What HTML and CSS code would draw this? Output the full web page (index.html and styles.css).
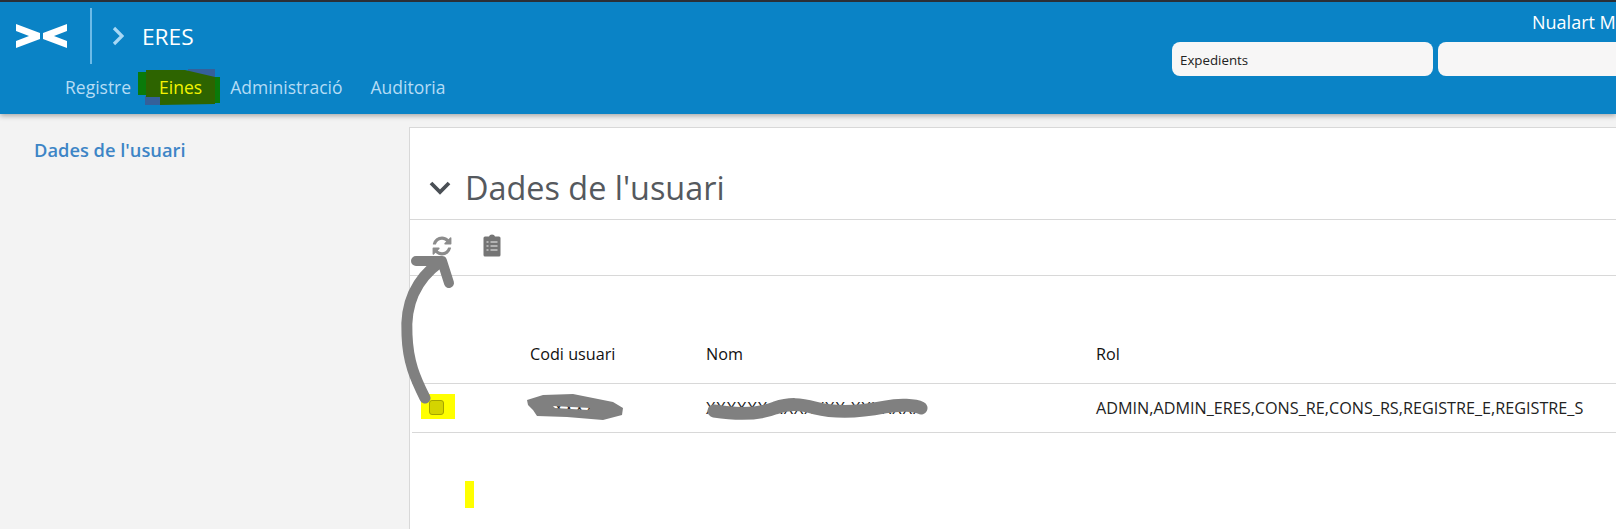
FILE: index.html
```html
<!DOCTYPE html>
<html lang="ca">
<head>
  <meta charset="utf-8">
  <title>ERES</title>
  <link rel="stylesheet" href="styles.css">
</head>
<body>
<header class="topbar">
  <div class="topbar-left">
    <div class="brand-row">
      <svg class="logo" width="52" height="26" viewBox="0 0 52 26">
        <path d="M0 1 L24 10 V16 L0 25 V18 L13 13 L0 8 Z" fill="#fff"/>
        <path d="M51 1 L27 10 V16 L51 25 V18 L38 13 L51 8 Z" fill="#fff"/>
      </svg>
      <span class="brand-sep"></span>
      <svg class="brand-chevron" width="12" height="20" viewBox="0 0 12 20">
        <path d="M2 2 L10 10 L2 18" fill="none" stroke="#a8d8f5" stroke-width="3.2"/>
      </svg>
      <span class="brand-name">ERES</span>
    </div>
    <nav class="nav">
      <a>Registre</a>
      <a class="nav-active">Eines</a>
      <a>Administració</a>
      <a>Auditoria</a>
    </nav>
  </div>
  <div class="topbar-right">
    <div class="user-name">Nualart M</div>
    <div class="search-row">
      <div class="search-box">Expedients</div>
      <div class="search-box search-box-wide"></div>
    </div>
  </div>
</header>

<div class="content">
  <aside class="sidebar">
    <a class="side-link">Dades de l'usuari</a>
  </aside>
  <main class="panel">
    <div class="panel-title">
      <svg width="24" height="16" viewBox="0 0 24 16">
        <path d="M3 3 L12 12 L21 3" fill="none" stroke="#4a4f55" stroke-width="3.8"/>
      </svg>
      <h1>Dades de l'usuari</h1>
    </div>
    <div class="toolbar">
      <svg class="tool-refresh" width="22" height="22" viewBox="0 0 1792 1792">
        <path d="M1639 1056q0 5-1 7-64 268-268 434.500t-478 166.500q-146 0-282.500-55t-243.500-157l-129 129q-19 19-45 19t-45-19-19-45v-448q0-26 19-45t45-19h448q26 0 45 19t19 45-19 45l-137 137q71 66 161 102t187 36q134 0 250-65t186-179q11-17 53-117 8-23 30-23h192q13 0 22.500 9.500t9.500 22.500zm25-800v448q0 26-19 45t-45 19h-448q-26 0-45-19t-19-45 19-45l138-138q-148-137-349-137-134 0-250 65t-186 179q-11 17-53 117-8 23-30 23h-199q-13 0-22.500-9.500t-9.500-22.500v-7q65-268 270-434.500t480-166.500q146 0 284 55.500t245 156.500l130-129q19-19 45-19t45 19 19 45z" fill="#8c8c8c"/>
      </svg>
      <svg class="tool-clip" width="18" height="23" viewBox="0 0 18 23">
        <path d="M2 2.500 H6 Q6.500 0.500 9 0.500 Q11.500 0.500 12 2.500 H16 Q17.500 2.500 17.500 4 V21 Q17.500 22.500 16 22.500 H2 Q0.500 22.500 0.500 21 V4 Q0.500 2.500 2 2.500 Z" fill="#757575"/>
        <path d="M3.500 8 h2 M7.500 8 h7 M3.500 12 h2 M7.500 12 h7 M3.500 16 h2 M7.500 16 h7" stroke="#c8c8c8" stroke-width="1.500"/>
      </svg>
    </div>
    <table class="users">
      <thead>
        <tr><th class="col-check"></th><th class="col-code">Codi usuari</th><th class="col-name">Nom</th><th>Rol</th></tr>
      </thead>
      <tbody>
        <tr>
          <td class="col-check"><span class="checkbox"></span></td>
          <td class="col-code masked masked-code">XXXX</td>
          <td class="col-name masked">XXXXXX XXXXXXX XXXXXXX</td>
          <td>ADMIN,ADMIN_ERES,CONS_RE,CONS_RS,REGISTRE_E,REGISTRE_S</td>
        </tr>
      </tbody>
    </table>
  </main>
</div>

<!-- marks someone drew on top of the screenshot -->
<svg class="marks" width="1616" height="529" viewBox="0 0 1616 529">
  <path d="M138 72 H146 V95 H138 Z M214 77 H220 V103 H214 Z" fill="#0a7a0a"/>
  <path d="M188 69 H215 V78 H188 Z M145 96 H161 V105 H145 Z" fill="#35609a"/>
  <path d="M146 70 H185 L215 77 V104 L160 105 V97 H146 Z" fill="#2d6400"/>
  <path d="M421 394 H455 V419 H421 Z" fill="#ffff00"/>
  <rect x="465" y="481" width="9" height="27" fill="#ffff00"/>
  <path d="M425 398 C415 378 408 362 407 335 C405 305 415 280 440 262" fill="none" stroke="#808080" stroke-width="11" stroke-linecap="round"/>
  <path d="M416 261 H442 L449 283" fill="none" stroke="#808080" stroke-width="10" stroke-linecap="round" stroke-linejoin="round"/>
  <path fill-rule="evenodd" fill="#808080" d="M527 400 L543 395 L573 394 L593 398 L613 402 L623 408 L622 415 L603 420 L567 417 L537 416 L533 410 L528 405 Z M553 406 L590 408 L588 410 L555 408 Z"/>
  <path d="M714 411 C740 415 760 414 775 408 C790 403 800 404 815 408 C835 413 860 412 885 407 C900 404 915 405 921 408" fill="none" stroke="#808080" stroke-width="13" stroke-linecap="round"/>
</svg>
</body>
</html>
```

FILE: styles.css
```css
* {
  box-sizing: border-box;
}

html, body {
  margin: 0;
  height: 529px;
  overflow: hidden;
}

body {
  font-family: "Open Sans", sans-serif;
  background-color: #f3f3f3;
  color: #222;
  position: relative;
}

/* top bar */
.topbar {
  height: 114px;
  background-color: #0a83c6;
  border-top: 2px solid #2b2f36;
  box-shadow: 0 2px 5px rgba(0, 0, 0, 0.3);
  display: flex;
  justify-content: space-between;
  overflow: hidden;
}

.brand-row {
  display: flex;
  align-items: center;
  height: 60px;
  margin-top: 4px;
  padding-left: 16px;
}

.logo {
  margin-right: 22px;
}

.brand-sep {
  width: 2px;
  height: 56px;
  background-color: #6dbbe8;
  margin-right: 20px;
}

.brand-chevron {
  margin-right: 18px;
}

.brand-name {
  font-size: 22.7px;
  color: #fff;
}

.nav {
  display: flex;
  gap: 28px;
  padding-left: 65px;
  margin-top: 9px;
  font-size: 17.5px;
  line-height: 24px;
  color: #b5dcf5;
}

.nav a.nav-active {
  color: #f4f400;
  position: relative;
  z-index: 2;
}

.topbar-right {
  width: 444px;
  flex: none;
  overflow: hidden;
}

.user-name {
  margin-top: 8px;
  padding-left: 360px;
  font-size: 18px;
  line-height: 24px;
  color: #fff;
  white-space: nowrap;
}

.search-row {
  display: flex;
  gap: 5px;
  margin-top: 8px;
}

.search-box {
  width: 261px;
  height: 34px;
  flex: none;
  background-color: #f7f6f6;
  border-radius: 8px;
  font-size: 13.3px;
  line-height: 36px;
  padding-left: 8px;
  color: #222;
}

.search-box-wide {
  width: 300px;
}

/* content */
.content {
  display: flex;
}

.sidebar {
  width: 409px;
  flex: none;
  padding: 23px 0 0 34px;
}

.side-link {
  font-size: 18.3px;
  font-weight: 600;
  color: #3d85c6;
}

.panel {
  flex: 1;
  height: 402px;
  margin-top: 13px;
  background-color: #fff;
  border: 1px solid #d8d8d8;
  border-right: none;
  border-bottom: none;
}

.panel-title {
  height: 92px;
  display: flex;
  align-items: flex-end;
  padding: 0 0 10px 18px;
  border-bottom: 1px solid #d8d8d8;
}

.panel-title svg {
  margin-bottom: 13px;
}

.panel-title h1 {
  margin: 0 0 0 13px;
  font-size: 32.4px;
  font-weight: 400;
  line-height: 44px;
  color: #55595e;
}

.toolbar {
  height: 56px;
  display: flex;
  align-items: flex-start;
  padding: 14px 0 0 21px;
  border-bottom: 1px solid #d8d8d8;
}

.tool-refresh {
  margin-top: 1px;
}

.tool-clip {
  margin-left: 30px;
}

/* table */
.users {
  width: 100%;
  border-collapse: collapse;
  font-size: 16.2px;
  color: #222;
  margin-left: 2px;
  table-layout: fixed;
}

.users th {
  height: 107px;
  padding: 50px 0 0 0;
  font-weight: 500;
  color: #111;
  text-align: left;
  border-bottom: 1px solid #d8d8d8;
}

.users td {
  height: 49px;
  padding: 0;
  border-bottom: 1px solid #d8d8d8;
  white-space: nowrap;
}

.col-check {
  width: 118px;
}

.col-code {
  width: 176px;
}

.col-name {
  width: 390px;
}

td.col-check {
  padding-left: 17px;
}

td.masked {
  letter-spacing: 1px;
}

td.masked-code {
  padding-left: 24px;
}

.checkbox {
  display: block;
  width: 15px;
  height: 15px;
  background-color: #d4d400;
  border: 1px solid #a4a400;
  border-radius: 3px;
  position: relative;
  z-index: 2;
}

/* annotations */
.marks {
  position: absolute;
  top: 0;
  left: 0;
}
```
